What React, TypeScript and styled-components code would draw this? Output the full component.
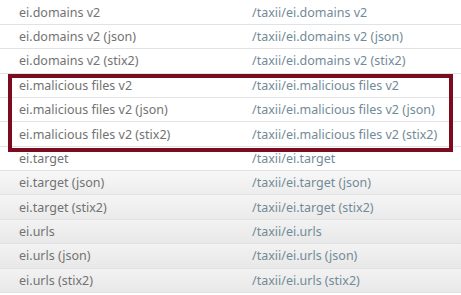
import React from "react";
import styled, { createGlobalStyle } from "styled-components";

const GlobalStyle = createGlobalStyle`
  html, body {
    margin: 0;
    padding: 0;
    background: #ffffff;
    font-family: "Noto Sans", "Open Sans", sans-serif;
  }
`;

const Table = styled.div`
  width: 461px;
  height: 295px;
  overflow: hidden;
  padding-top: 0.6px;
  box-sizing: border-box;
`;

const Row = styled.div<{ $shade: number }>`
  display: grid;
  grid-template-columns: 233px 1fr;
  align-items: center;
  height: 24.36px;
  box-sizing: border-box;
  padding-left: 19px;
  border-bottom: 1px solid #e2e2e5;
  background: ${(p) =>
    p.$shade > 0
      ? `linear-gradient(hsl(0 0% ${98 - p.$shade}%), hsl(0 0% ${94 - p.$shade}%))`
      : "#ffffff"};
`;

const Name = styled.span`
  font-size: 12.5px;
  color: #727272;
  white-space: nowrap;
`;

const Path = styled.span`
  font-size: 12.5px;
  color: #738a98;
  white-space: nowrap;
`;

// annotation box drawn over the three highlighted rows
const Highlight = styled.div`
  position: relative;

  &::after {
    content: "";
    position: absolute;
    left: 8px;
    top: 0;
    width: 445px;
    height: 78px;
    box-sizing: border-box;
    border: 4.5px solid #7d0b20;
    pointer-events: none;
  }
`;

const feeds = ["ei.domains v2", "ei.malicious files v2", "ei.target", "ei.urls"];
const variants = ["", " (json)", " (stix2)"];

const rows = feeds.flatMap((f) => variants.map((v) => f + v));

const App: React.FC = () => {
  const renderRow = (name: string, i: number) => (
    <Row key={name} $shade={i >= 7 ? Math.min(i - 6, 3) : 0}>
      <Name>{name}</Name>
      <Path>/taxii/{name}</Path>
    </Row>
  );

  return (
    <>
      <GlobalStyle />
      <Table>
        {rows.slice(0, 3).map((r, i) => renderRow(r, i))}
        <Highlight>{rows.slice(3, 6).map((r, i) => renderRow(r, i + 3))}</Highlight>
        {rows.slice(6).map((r, i) => renderRow(r, i + 6))}
      </Table>
    </>
  );
};

export default App;
